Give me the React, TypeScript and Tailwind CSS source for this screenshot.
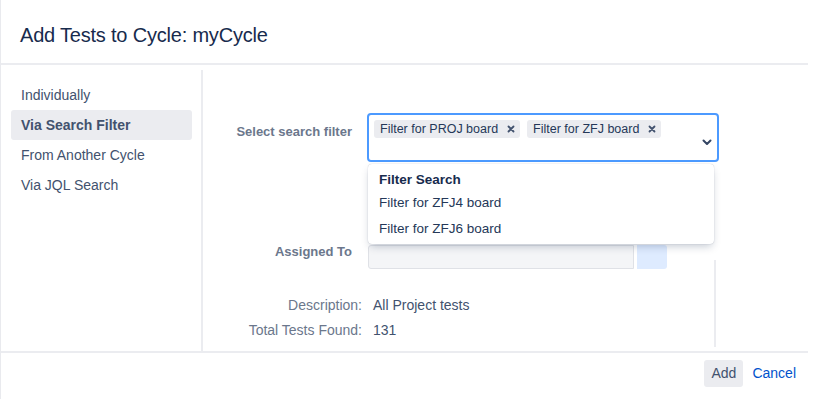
import React from 'react';

const font = { fontFamily: '"Liberation Sans", Arial, sans-serif' };

function Cross() {
  return (
    <svg width="8" height="8" viewBox="0 0 8 8" className="shrink-0">
      <path d="M1.5 1.5l5 5M6.5 1.5l-5 5" stroke="#42526e" strokeWidth="1.8" strokeLinecap="round" />
    </svg>
  );
}

function Tag({ label }: { label: string }) {
  return (
    <span className="flex items-center gap-[9px] h-[18px] pl-[6px] pr-[5px] rounded-[3px] bg-[#ebecf0] text-[12.5px] text-[#253858]">
      {label}
      <Cross />
    </span>
  );
}

const nav = ['Individually', 'Via Search Filter', 'From Another Cycle', 'Via JQL Search'];

export default function App() {
  return (
    <div className="w-[817px] h-[399px] bg-white overflow-hidden" style={font}>
      <div className="w-[808px] h-full border-l border-[#e9eaee] flex flex-col">
        {/* Header */}
        <div className="h-[65px] shrink-0 border-b-2 border-[#ebecf0] flex items-center pl-[19px] pt-[6px]">
          <h1 className="text-[20px] text-[#172b4d] tracking-[-0.2px]">Add Tests to Cycle: myCycle</h1>
        </div>

        {/* Body */}
        <div className="flex h-[286px] shrink-0">
          <div className="w-[202px] shrink-0 mt-[5px] border-r-2 border-[#ebecf0] pt-[10px] pl-[10px] pr-[9px]">
            {nav.map((n) => (
              <div
                key={n}
                className={
                  'h-[30px] flex items-center pl-[10px] text-[14px] text-[#42526e] rounded-[3px] ' +
                  (n === 'Via Search Filter' ? 'bg-[#ebecf0] font-semibold' : '')
                }
              >
                {n}
              </div>
            ))}
          </div>

          <div className="relative flex-1 pt-[48px]">
            {/* Search filter row */}
            <div className="flex items-start">
              <div className="w-[149px] shrink-0 text-right text-[13px] font-semibold text-[#6b778c] pt-[9px]">
                Select search filter
              </div>
              <div className="relative ml-[15px]">
                <div className="w-[352px] h-[49px] border-2 border-[#4c9aff] rounded-[4px] flex items-start pl-[5px] pt-[5px] gap-[7px]">
                  <Tag label="Filter for PROJ board" />
                  <Tag label="Filter for ZFJ board" />
                  <svg width="10" height="7" viewBox="0 0 10 7" className="ml-auto mr-[5px] mt-[19px]">
                    <path d="M1.5 1.5L5 5l3.5-3.5" stroke="#344563" strokeWidth="2" fill="none" strokeLinecap="round" strokeLinejoin="round" />
                  </svg>
                </div>
                {/* Dropdown menu */}
                <div className="absolute left-[1px] top-[51px] w-[346px] h-[80px] bg-white rounded-[4px] shadow-[0_4px_8px_-2px_rgba(9,30,66,0.25),0_0_1px_rgba(9,30,66,0.31)] z-10 pt-[6px] text-[13.5px]">
                  <div className="h-[20px] flex items-center pl-[11px] font-bold text-[#172b4d]">Filter Search</div>
                  <div className="h-[26px] flex items-center pl-[11px] text-[#253858]">Filter for ZFJ4 board</div>
                  <div className="h-[26px] flex items-center pl-[11px] text-[#253858]">Filter for ZFJ6 board</div>
                </div>
              </div>
            </div>

            {/* Assigned To */}
            <div className="flex items-start mt-[83px]">
              <div className="w-[149px] shrink-0 text-right text-[13px] font-semibold text-[#6b778c] -mt-[3px]">
                Assigned To
              </div>
              <div className="ml-[16px] flex gap-[3px]">
                <div className="w-[266px] h-[24px] bg-[#f4f5f7] border border-[#dfe1e6] rounded-l-[3px]" />
                <div className="w-[30px] h-[24px] bg-[#deebff] rounded-r-[3px]" />
              </div>
            </div>

            {/* Details */}
            <div className="mt-[26px] flex flex-col gap-[4px] text-[14px]">
              <div className="flex">
                <div className="w-[159px] shrink-0 text-right text-[#6b778c]">Description:</div>
                <div className="ml-[11px] text-[#42526e]">All Project tests</div>
              </div>
              <div className="flex">
                <div className="w-[159px] shrink-0 text-right text-[#6b778c]">Total Tests Found:</div>
                <div className="ml-[11px] text-[#42526e]">131</div>
              </div>
            </div>

            <div className="absolute left-[511px] top-[195px] w-[2px] h-[87px] bg-[#ebecf0]" />
          </div>
        </div>

        {/* Footer */}
        <div className="border-t-2 border-[#ebecf0] flex justify-end items-center gap-[9px] pr-[12px] pt-[7px]">
          <button className="h-[27px] px-[7px] rounded-[3px] bg-[#ebecf0] text-[14px] text-[#42526e]">Add</button>
          <button className="text-[14px] text-[#0052cc]">Cancel</button>
        </div>
      </div>
    </div>
  );
}
